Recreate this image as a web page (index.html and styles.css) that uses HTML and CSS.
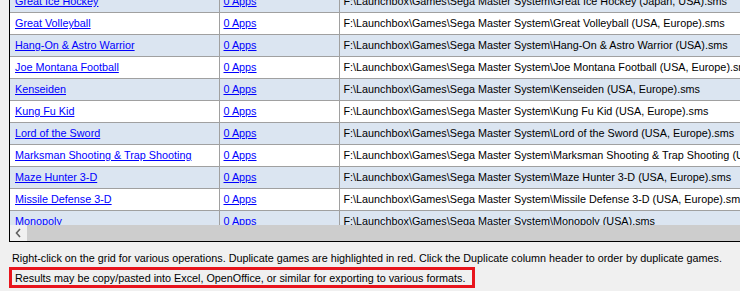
FILE: index.html
```html
<!DOCTYPE html>
<html>
<head>
<meta charset="utf-8">
<link rel="stylesheet" href="styles.css">
</head>
<body>
<div class="window">
  <div class="grid">
    <div class="viewport">
      <table class="games">
        <colgroup><col class="c-title"><col class="c-apps"><col class="c-path"></colgroup>
        <tbody>
          <tr class="alt"><td><a href="#">Great Ice Hockey</a></td><td><a href="#">0 Apps</a></td><td>F:\Launchbox\Games\Sega Master System\Great Ice Hockey (Japan, USA).sms</td></tr>
          <tr><td><a href="#">Great Volleyball</a></td><td><a href="#">0 Apps</a></td><td>F:\Launchbox\Games\Sega Master System\Great Volleyball (USA, Europe).sms</td></tr>
          <tr class="alt"><td><a href="#">Hang-On &amp; Astro Warrior</a></td><td><a href="#">0 Apps</a></td><td>F:\Launchbox\Games\Sega Master System\Hang-On &amp; Astro Warrior (USA).sms</td></tr>
          <tr><td><a href="#">Joe Montana Football</a></td><td><a href="#">0 Apps</a></td><td>F:\Launchbox\Games\Sega Master System\Joe Montana Football (USA, Europe).sms</td></tr>
          <tr class="alt"><td><a href="#">Kenseiden</a></td><td><a href="#">0 Apps</a></td><td>F:\Launchbox\Games\Sega Master System\Kenseiden (USA, Europe).sms</td></tr>
          <tr><td><a href="#">Kung Fu Kid</a></td><td><a href="#">0 Apps</a></td><td>F:\Launchbox\Games\Sega Master System\Kung Fu Kid (USA, Europe).sms</td></tr>
          <tr class="alt"><td><a href="#">Lord of the Sword</a></td><td><a href="#">0 Apps</a></td><td>F:\Launchbox\Games\Sega Master System\Lord of the Sword (USA, Europe).sms</td></tr>
          <tr><td><a href="#">Marksman Shooting &amp; Trap Shooting</a></td><td><a href="#">0 Apps</a></td><td>F:\Launchbox\Games\Sega Master System\Marksman Shooting &amp; Trap Shooting (USA, Europe).sms</td></tr>
          <tr class="alt"><td><a href="#">Maze Hunter 3-D</a></td><td><a href="#">0 Apps</a></td><td>F:\Launchbox\Games\Sega Master System\Maze Hunter 3-D (USA, Europe).sms</td></tr>
          <tr><td><a href="#">Missile Defense 3-D</a></td><td><a href="#">0 Apps</a></td><td>F:\Launchbox\Games\Sega Master System\Missile Defense 3-D (USA, Europe).sms</td></tr>
          <tr class="alt"><td><a href="#">Monopoly</a></td><td><a href="#">0 Apps</a></td><td>F:\Launchbox\Games\Sega Master System\Monopoly (USA).sms</td></tr>
        </tbody>
      </table>
    </div>
    <div class="hscroll">
      <div class="arrow">
        <svg width="17" height="16" viewBox="0 0 17 16"><path d="M10 4 L6.5 8 L10 12" fill="none" stroke="#606060" stroke-width="1.6"/></svg>
      </div>
      <div class="thumb"></div>
    </div>
  </div>
  <div class="notes">
    <p class="note">Right-click on the grid for various operations. Duplicate games are highlighted in red. Click the Duplicate column header to order by duplicate games.</p>
    <p class="note highlight">Results may be copy/pasted into Excel, OpenOffice, or similar for exporting to various formats.</p>
  </div>
</div>
</body>
</html>
```

FILE: styles.css
```css
html, body {
  margin: 0;
  padding: 0;
  background: #f0f0f0;
  width: 740px;
  height: 291px;
  overflow: hidden;
  font-family: "Liberation Sans", Arial, sans-serif;
  font-size: 10.8px;
  color: #000;
}

.window {
  display: flex;
  flex-direction: column;
}

.grid {
  margin-left: 9px;
  border-left: 1px solid #000;
  border-bottom: 1px solid #000;
  display: flex;
  flex-direction: column;
}

.viewport {
  height: 225px;
  overflow: hidden;
  background: #fff;
}

.games {
  border-collapse: collapse;
  table-layout: fixed;
  width: 760px;
  margin-top: -9px;
}

.c-title { width: 209px; }
.c-apps { width: 120px; }
.c-path { width: 431px; }

.games td {
  height: 21px;
  padding: 0 0 0 4px;
  border-bottom: 1px solid #a0a0a0;
  border-right: 1px solid #a0a0a0;
  white-space: nowrap;
  overflow: hidden;
  vertical-align: middle;
  line-height: 13px;
}

.games td:first-child { padding-left: 5px; }
.games td:last-child { border-right: none; }

.games tr { background: #fff; }
.games tr.alt { background: #dbe5f1; }

.games a {
  color: #0000ff;
  text-decoration: underline;
}

.hscroll {
  height: 16px;
  display: flex;
  background: #f0f0f0;
}

.arrow {
  width: 17px;
  height: 16px;
  display: flex;
}

.thumb {
  flex: 1;
  background: #cdcdcd;
}

.notes {
  display: flex;
  flex-direction: column;
  align-items: flex-start;
  padding-top: 10px;
}

.note {
  margin: 0;
  padding-left: 12px;
  line-height: 13px;
  white-space: nowrap;
}

.highlight {
  margin-top: 2px;
  margin-left: 9px;
  padding: 2px 7px 0 3px;
  border: 3px solid #e8141c;
}
```
